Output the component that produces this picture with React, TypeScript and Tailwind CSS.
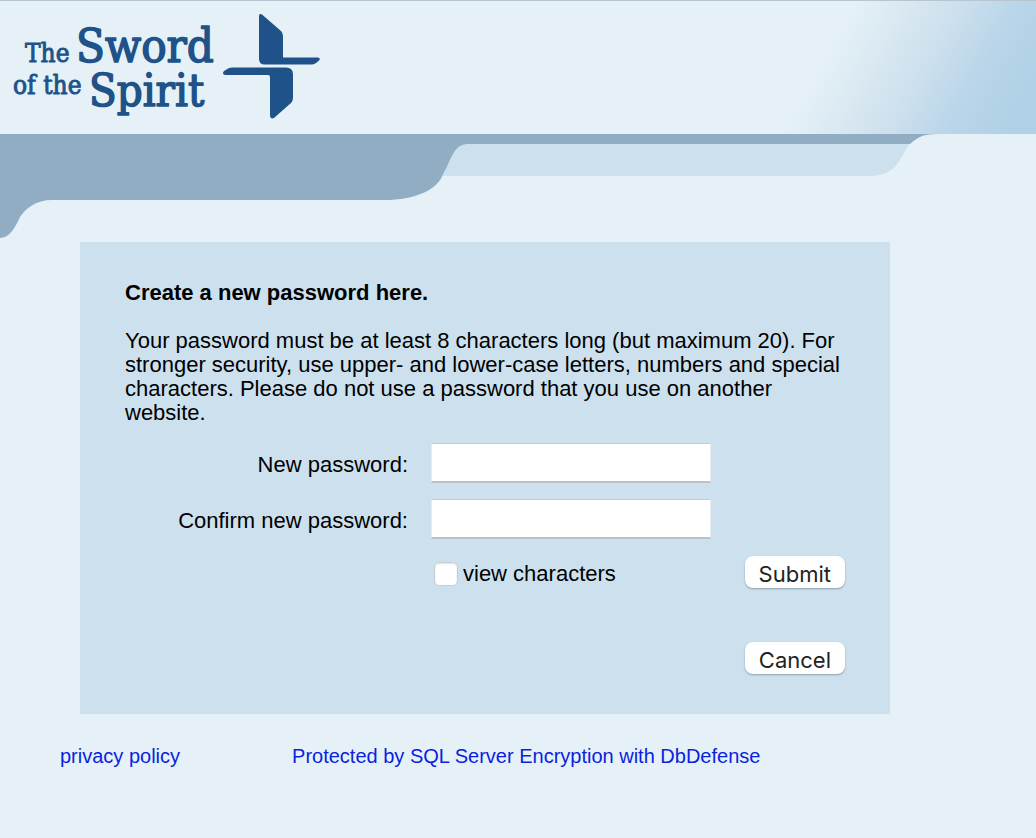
import React, { useState } from 'react';

const Logo: React.FC = () => (
  <svg
    className="block h-[134px] w-[330px] max-w-full fill-[#20528a]"
    viewBox="0 0 330 134"
    role="img"
    aria-label="The Sword of the Spirit"
  >
    <g fontFamily="'DejaVu Serif Condensed', 'DejaVu Serif', serif" stroke="#20528a" strokeLinejoin="round">
      <text x="25" y="61" fontSize="26" strokeWidth="0.900">The</text>
      <text x="76" y="61" fontSize="47" strokeWidth="1.500">Sword</text>
      <text x="13" y="93" fontSize="26" strokeWidth="0.900">of the</text>
      <text x="89" y="105" fontSize="45" strokeWidth="1.500">Spirit</text>
    </g>
    <path d="M259 15 Q259 12 262 13.500 L281 30 Q283 32 283 35 V56.500 H318 Q321 57 319 59.500 L316 62 Q314 63.500 311 63.500 H265 Q259 63.500 259 58 Z" />
    <path d="M224 70 L229 67 Q230 66.500 233 66.500 H286 Q293 66.500 293 73 V97 Q293 100 291 102 L274 117 Q270 118.500 270 114 V76 Q270 74 268 74 H225 Q221.500 73 224 70 Z" />
  </svg>
);

const Banner: React.FC = () => (
  <svg className="block h-[108px] w-[940px]" viewBox="0 0 940 108" aria-hidden="true">
    <path d="M440 9 H910 C901 21 898 42 870 42 H440 Z" fill="#cce0ee" />
    <path
      d="M0 0 H940 C920 0 918 4 910 10 H468 C453 10 451 27 443 40 C438 56 415 66 384 66 H52 C36 66 26 74 20 83 C16 92 10 104 0 104 Z"
      fill="#90adc4"
    />
  </svg>
);

interface PasswordFieldProps {
  id: string;
  label: string;
  visible: boolean;
}

const PasswordField: React.FC<PasswordFieldProps> = ({ id, label, visible }) => (
  <>
    <label htmlFor={id} className="pt-1 text-right">{label}</label>
    <input
      id={id}
      name={id}
      type={visible ? 'text' : 'password'}
      maxLength={20}
      className="h-10 w-full max-w-[280px] border border-t-[#b9cfdd] border-x-[#e4edf3] border-b-2 border-b-[#b9c2ca] bg-white px-2"
    />
  </>
);

const buttonClass =
  "h-8 rounded-lg bg-white px-[14px] font-['Inter',sans-serif] text-[22px] leading-9 text-[#222] shadow-[0_1px_2px_rgba(0,0,0,0.3)]";

const App: React.FC = () => {
  const [visible, setVisible] = useState(false);

  return (
    <div className="min-h-screen bg-[#e5f1f6] font-['Liberation_Sans',Arial,sans-serif] text-[22px] leading-6 text-black">
      <header className="h-[134px] overflow-hidden border-t border-[#b7c5d0] bg-[linear-gradient(119deg,#e5f1f6_77%,#cfe1ee_86%,#b9d5e9_92%,#b0d1e6_97%)]">
        <Logo />
      </header>
      <div className="overflow-hidden">
        <Banner />
      </div>

      <main className="mr-4 ml-20 max-w-[810px] bg-[#cce0ee] px-[45px] pt-[39px] pb-10">
        <form onSubmit={(e) => e.preventDefault()}>
          <h1 className="mb-6 font-bold">Create a new password here.</h1>
          <p className="mb-[18px]">
            Your password must be at least 8 characters long (but maximum 20). For stronger security, use upper- and
            lower-case letters, numbers and special characters. Please do not use a password that you use on another
            website.
          </p>

          <div className="grid grid-cols-[283px_1fr] items-center gap-x-[23px] gap-y-4">
            <PasswordField id="newPassword" label="New password:" visible={visible} />
            <PasswordField id="confirmPassword" label="Confirm new password:" visible={visible} />
            <div className="col-start-2 flex items-center justify-between pt-px">
              <label className="flex items-center gap-[5px] pt-1">
                <input
                  type="checkbox"
                  checked={visible}
                  onChange={(e) => setVisible(e.target.checked)}
                  className="ml-[3px] size-6 appearance-none rounded-[5px] border border-[#c8cdd1] bg-white shadow-[inset_0_1px_2px_rgba(0,0,0,0.12)] checked:bg-[#20528a]"
                />
                view characters
              </label>
              <button type="submit" className={buttonClass}>Submit</button>
            </div>
          </div>

          <div className="mt-[54px] flex justify-end">
            <button type="button" className={buttonClass}>Cancel</button>
          </div>
        </form>
      </main>

      <footer className="mt-[30px] ml-[60px] flex gap-28 pb-8 text-[20px] text-[#0a1fe0]">
        <a href="#privacy">privacy policy</a>
        <a href="#dbdefense">Protected by SQL Server Encryption with DbDefense</a>
      </footer>
    </div>
  );
};

export default App;
